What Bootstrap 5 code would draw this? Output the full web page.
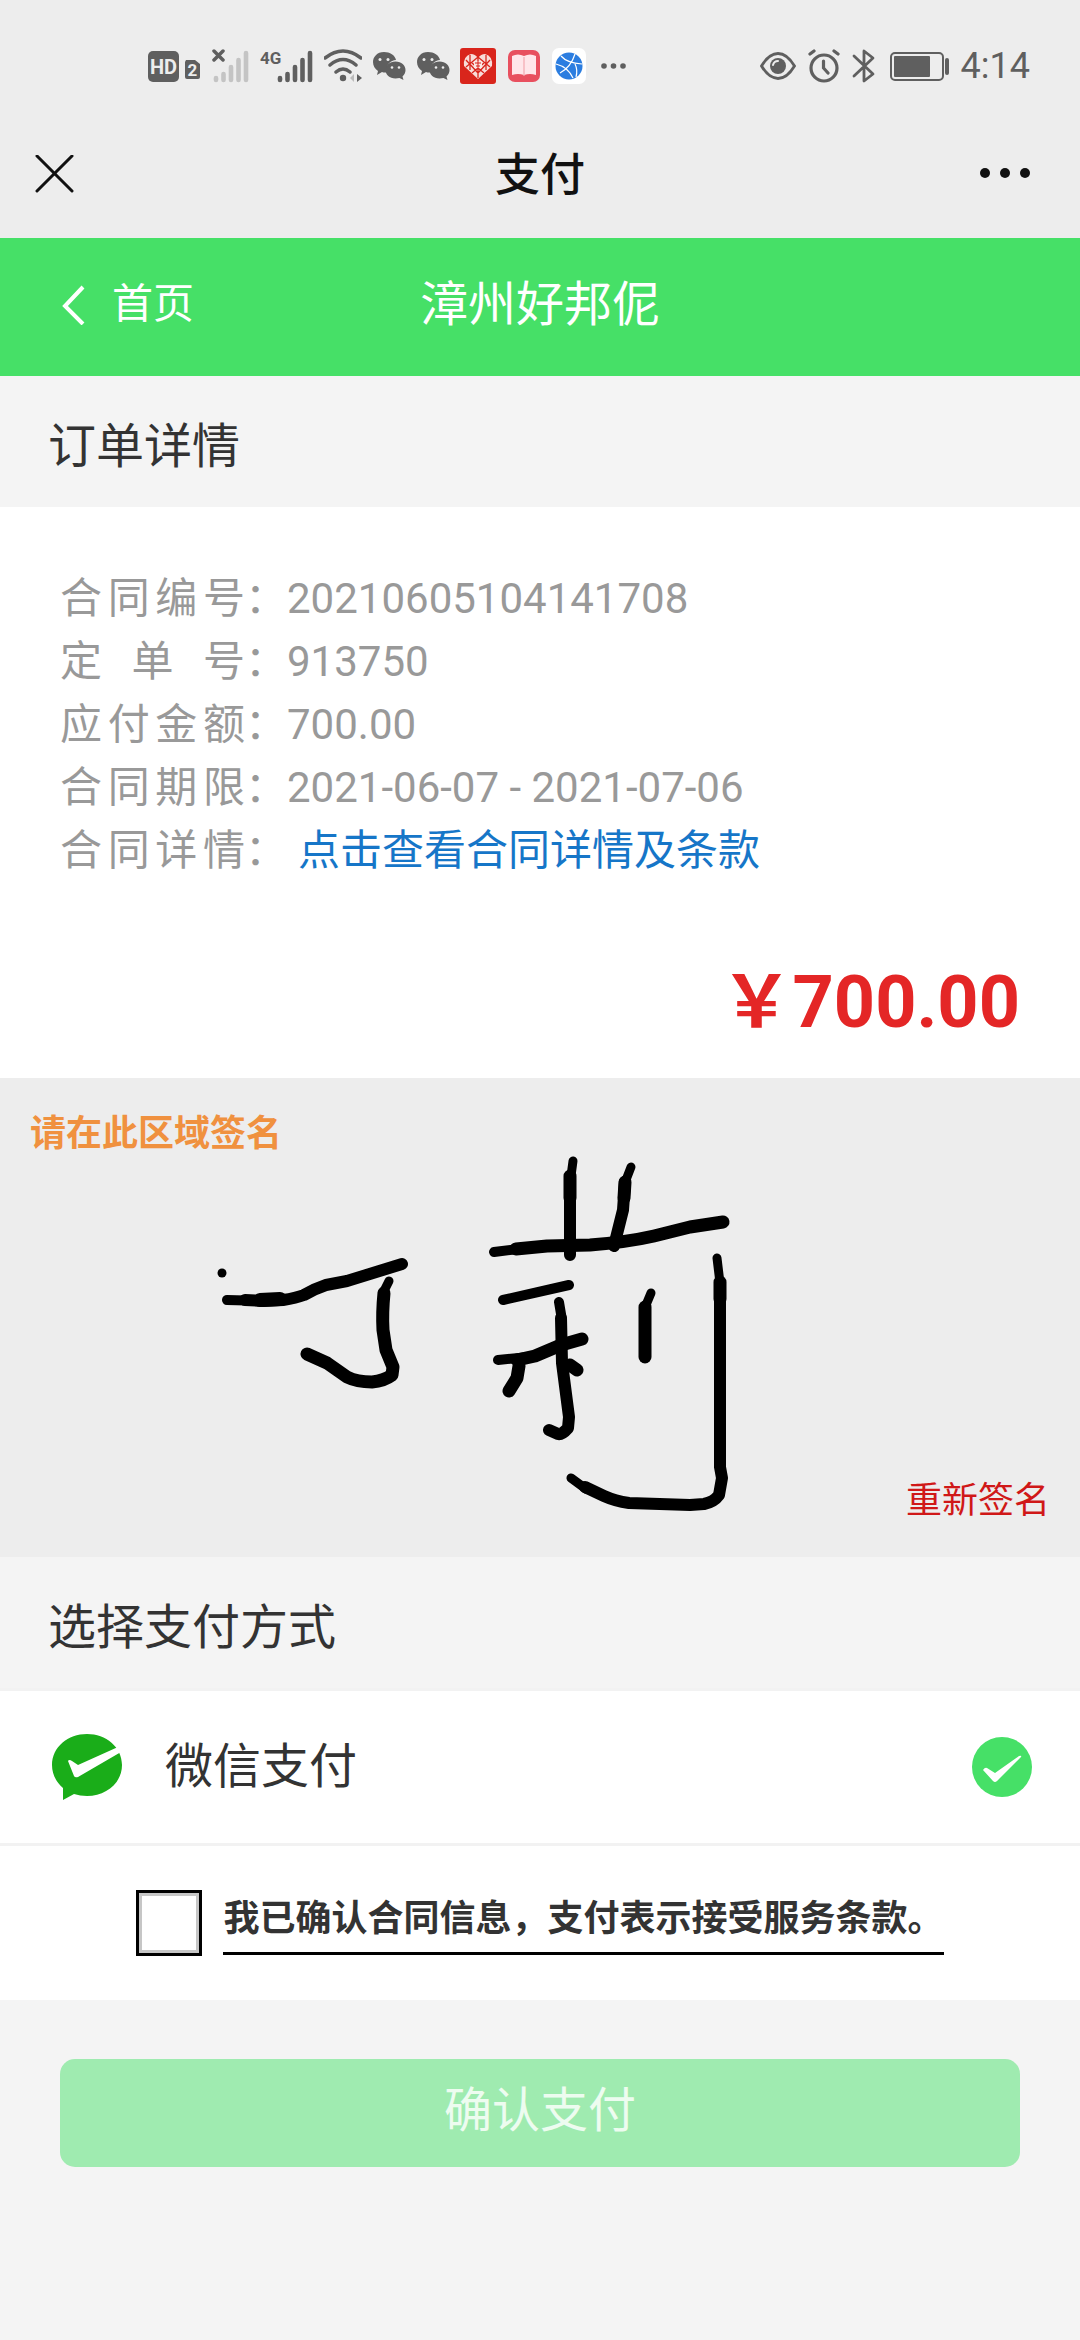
<!DOCTYPE html>
<html lang="zh-CN">
<head>
<meta charset="utf-8">
<meta name="viewport" content="width=device-width, initial-scale=1">
<title>支付</title>
<link rel="stylesheet" href="https://cdn.jsdelivr.net/npm/bootstrap@5.3.0/dist/css/bootstrap.min.css">
<style>
  :root { --pay-green: #46e067; --bar-grey: #ededed; --page-grey: #f4f4f4; --ink: #333; }
  body { font-family: Roboto, "Noto Sans CJK SC", sans-serif; background: var(--page-grey); color: var(--ink); font-size: 42px; line-height: 63px; }
  svg { display: block; flex: none; }
  a { text-decoration: none; }
  .top-area { background: var(--bar-grey); color: #111; padding-bottom: 20px; }
  .status-bar { height: 132px; padding: 0 50px 0 148px; color: #5f5f5f; }
  .status-left { gap: 10px; }
  .status-right { gap: 12px; }
  .status-time { font-size: 36px; line-height: 40px; }
  .title-bar { height: 86px; padding: 0 34px; }
  .title-bar h1 { font-size: 45px; line-height: 60px; font-weight: 500; margin: 0; padding-top: 2px; }
  .three-part { display: grid; grid-template-columns: 1fr auto 1fr; align-items: center; }
  .plain-btn { background: none; border: 0; padding: 0; color: inherit; }
  .shop-bar { background: var(--pay-green); height: 138px; padding: 0 60px 5px; }
  .shop-bar, .shop-bar a { color: #fff; }
  .shop-home { gap: 26px; font-size: 41px; }
  .shop-name { font-size: 48px; }
  .section-head { font-size: 48px; line-height: 63px; font-weight: 400; margin: 0; padding: 39px 48px 29px; }
  .order-box { padding: 60px 60px 0; color: #999; }
  .order-key { width: 185px; text-align-last: justify; font-weight: 400; }
  .order-link { color: #1676c8; margin-left: 11px; }
  .order-price { color: #e42626; font-size: 72px; line-height: 84px; font-weight: 700; padding: 79px 0 33px; text-align: right; }
  .sign-box { background: var(--bar-grey); height: 479px; font-size: 36px; line-height: 54px; padding: 29px 30px; }
  .sign-hint { color: #f0913f; font-weight: 700; }
  .sign-redo { color: #d01818; }
  .sign-ink { inset: 0; width: 100%; height: 100%; }
  .pay-row { padding: 43px 48px; border: solid #f2f2f2; border-width: 3px 0; font-size: 48px; line-height: 66px; }
  .pay-row label { gap: 37px; }
  .pay-radio.form-check-input { width: 60px; height: 60px; margin: 0; border: 0; }
  .pay-radio.form-check-input:checked { background-color: var(--pay-green); background-size: 60px 60px;
    background-image: url("data:image/svg+xml,%3Csvg xmlns='http://www.w3.org/2000/svg' viewBox='0 0 60 60'%3E%3Cpath d='M11 33q2-3 4-2l8 5 24-17q3-1 2 1L25 44q-2 2-4 0z' fill='%23fff'/%3E%3C/svg%3E"); }
  .agree-row { padding: 44px 48px; gap: 21px; font-size: 36px; line-height: 54px; font-weight: 700; }
  .agree-tick.form-check-input { width: 66px; height: 66px; margin: 0; border: 3px solid #000; border-radius: 0; box-shadow: inset 0 0 0 3px #c6c6c6; }
  .agree-text { border-bottom: 3px solid #000; padding-bottom: 6px; }
  .submit-area { padding: 59px 60px; }
  .submit-area .btn { --bs-btn-font-size: 48px; --bs-btn-line-height: 72px; --bs-btn-border-radius: 15px; --bs-btn-border-width: 0;
    --bs-btn-disabled-bg: #9febb0; --bs-btn-disabled-color: #edfcf0; --bs-btn-disabled-opacity: 1; padding: 16px 0 20px; }
</style>
<script src="https://cdn.jsdelivr.net/npm/bootstrap@5.3.0/dist/js/bootstrap.bundle.min.js"></script>
</head>
<body>
<svg width="0" height="0" class="position-absolute" aria-hidden="true">
  <symbol id="bars" viewBox="0 0 36 34">
    <path d="M3 29v2M10.500 25v6M18 18v13M25.500 11v20M33 4v27" fill="none" stroke="currentColor" stroke-width="4.600" stroke-linecap="round"/>
  </symbol>
  <symbol id="chat" viewBox="0 0 34 30">
    <path fill="currentColor" d="M12 1C5 1 1 6 1 11c0 4 2 7 5 9l-1 4 5-3q3 1 5 0c-2-7 4-12 9-12C23 4 18 1 12 1z"/>
    <path fill="currentColor" d="M23.500 10.500c-6 0-10 4-10 8.500s4 8.500 10 8.500l4-.5 4 2-1-3.500c2-2 3-4 3-6.500 0-4.500-4-8.500-10-8.500z"/>
    <g fill="#ededed"><circle cx="8" cy="8.500" r="1.500"/><circle cx="16" cy="8.500" r="1.500"/><circle cx="20" cy="16.500" r="1.300"/><circle cx="27" cy="16.500" r="1.300"/></g>
  </symbol>
</svg>

<header class="top-area">
  <div class="status-bar d-flex justify-content-between align-items-center">
    <div class="status-left d-flex align-items-center">
      <svg width="54" height="36" viewBox="0 0 54 36" font-family="Roboto" font-weight="700" fill="#ededed" text-anchor="middle">
        <rect x="0" y="3" width="31" height="31" rx="5" fill="#5f5f5f"/><text x="15.500" y="26" font-size="20">HD</text>
        <path d="M38 12h9l5 4v13q0 2-2 2H39q-2 0-2-2V14z" fill="#5f5f5f"/><text x="44.500" y="28" font-size="17">2</text>
      </svg>
      <svg width="38" height="36" viewBox="0 0 38 36"><use href="#bars" x="1" y="1" width="36" height="34" color="#c4c4c4"/><path d="M2 3l9 9M11 3l-9 9" stroke="#5f5f5f" stroke-width="3.500" stroke-linecap="round"/></svg>
      <svg width="54" height="36" viewBox="0 0 54 36"><text x="0" y="16" font-family="Roboto" font-weight="700" font-size="17" fill="#5f5f5f">4G</text><use href="#bars" x="17" y="1" width="36" height="34"/></svg>
      <svg width="38" height="36" viewBox="0 0 38 36" fill="none" stroke="#5f5f5f" stroke-width="3.500" stroke-linecap="round"><path d="M1 10q18-14 36 0M6 17q13-11 26 0M12 24q7-6 14 0"/><circle cx="19" cy="30" r="3.200" fill="#5f5f5f" stroke="none"/><path d="M30 26v8l-4-4z" fill="#bbb" stroke="none"/><path d="M33 26v8l5-4z" fill="#5f5f5f" stroke="none"/></svg>
      <svg width="34" height="30"><use href="#chat"/></svg>
      <svg width="34" height="30"><use href="#chat"/></svg>
      <svg width="36" height="36" viewBox="0 0 36 36"><rect width="36" height="36" rx="3" fill="#d9251c"/><path d="M18 31L4 18q-1-10 7-12 4 0 7 4 3-4 7-4 8 2 7 12z" fill="#f8dcd8"/><path d="M6 12l12 13 12-13M6 19l12-10 12 10M18 9v21M10 7v15M26 7v15M12 25l12-10M24 25L12 15" fill="none" stroke="#d9251c" stroke-width="1.300"/><rect x="14" y="13" width="8" height="7" fill="#fbe8e5"/><path d="M15 15h6M16 18h4M18 13v7" stroke="#d9251c"/></svg>
      <svg width="36" height="36" viewBox="0 0 36 36"><rect x="2" y="2" width="32" height="32" rx="7" fill="#e8505f"/><path d="M6 8q6-3 12 0 6-3 12 0v19q-6-2-12 0-6-2-12 0z" fill="#ffe6ea"/><path d="M18 9v19" stroke="#f4a8b0" stroke-width="1.200"/></svg>
      <svg width="34" height="36" viewBox="0 0 34 36"><rect width="34" height="36" rx="7" fill="#fff"/><circle cx="17" cy="18" r="13.500" fill="#2b7de0"/><path d="M4 16q12 3 17 14M9 8q6 7 21 8M8 25q11-6 15-19M24 29q2-7-1-13" stroke="#fff" stroke-width="1.200" fill="none"/></svg>
      <svg width="34" height="36" fill="#5f5f5f"><circle cx="8" cy="18" r="2.800"/><circle cx="17.500" cy="18" r="2.800"/><circle cx="27" cy="18" r="2.800"/></svg>
    </div>
    <div class="status-right d-flex align-items-center">
      <svg width="36" height="36" viewBox="0 0 36 36"><path d="M1.500 18Q9 5.500 18 5.500T34.500 18Q27 30.500 18 30.500T1.500 18z" fill="none" stroke="#5f5f5f" stroke-width="2.800"/><circle cx="18" cy="18" r="8" fill="#5f5f5f"/><path d="M13 17q1-4 5-4" stroke="#ededed" stroke-width="2" fill="none" stroke-linecap="round"/></svg>
      <svg width="32" height="36" viewBox="0 0 32 36" fill="none" stroke="#5f5f5f" stroke-width="3.200" stroke-linecap="round"><circle cx="16" cy="20" r="13"/><path d="M15.500 13v7l4.500 5M2 6l4-3M30 6l-4-3"/></svg>
      <svg width="24" height="36" viewBox="0 0 24 36" fill="none" stroke="#5f5f5f" stroke-width="2.800" stroke-linejoin="round" stroke-linecap="round"><path d="M2 8l19 18-9 7V3l9 7L2 28"/></svg>
      <svg width="61" height="36" viewBox="0 0 61 36"><rect x="3" y="5" width="52" height="27" rx="4" fill="none" stroke="#5f5f5f" stroke-width="2"/><rect x="6" y="8" width="36" height="21" rx="1" fill="#5f5f5f"/><rect x="57" y="10" width="4" height="17" rx="2" fill="#5f5f5f"/></svg>
      <time class="status-time">4:14</time>
    </div>
  </div>
  <div class="title-bar three-part">
    <button type="button" class="plain-btn me-auto" aria-label="关闭"><svg width="40" height="40" viewBox="0 0 40 40" stroke="#111" stroke-width="3" stroke-linecap="round"><path d="M3 1l35 35M38 1L3 36"/></svg></button>
    <h1>支付</h1>
    <button type="button" class="plain-btn ms-auto" aria-label="更多"><svg width="66" height="40" viewBox="0 0 66 40" fill="#111"><circle cx="5" cy="18" r="5"/><circle cx="25" cy="18" r="5"/><circle cx="45" cy="18" r="5"/></svg></button>
  </div>
</header>

<nav class="shop-bar three-part">
  <a href="#" class="shop-home d-flex align-items-center"><svg width="26" height="40" viewBox="0 0 26 40" fill="none" stroke="#fff" stroke-width="4"><path d="M23 2L5 21l18 18"/></svg>首页</a>
  <span class="shop-name">漳州好邦伲</span>
</nav>

<main>
  <h2 class="section-head">订单详情</h2>
  <section class="bg-white order-box">
    <dl class="m-0">
      <div class="d-flex"><dt class="order-key">合同编号</dt><span>：</span><dd class="m-0">20210605104141708</dd></div>
      <div class="d-flex"><dt class="order-key">定 单 号</dt><span>：</span><dd class="m-0">913750</dd></div>
      <div class="d-flex"><dt class="order-key">应付金额</dt><span>：</span><dd class="m-0">700.00</dd></div>
      <div class="d-flex"><dt class="order-key">合同期限</dt><span>：</span><dd class="m-0">2021-06-07 - 2021-07-06</dd></div>
      <div class="d-flex"><dt class="order-key">合同详情</dt><span>：</span><dd class="m-0"><a href="#" class="order-link">点击查看合同详情及条款</a></dd></div>
    </dl>
    <div class="order-price">￥700.00</div>
  </section>

  <section class="sign-box position-relative d-flex flex-column justify-content-between">
    <span class="sign-hint">请在此区域签名</span>
    <svg class="sign-ink position-absolute" viewBox="0 0 1080 479" role="img" aria-label="签名" fill="none" stroke="#000" stroke-width="12" stroke-linecap="round" stroke-linejoin="round">
      <circle cx="222" cy="195" r="4.500" fill="#000" stroke="none"/>
      <path stroke-width="10" d="M227 222L263 223"/>
      <path d="M245 222L263 223 283 222Q296 220 304 217 314 211 326 207L347 203 402 186"/>
      <path stroke-width="14" d="M260 222L280 221"/>
      <path stroke-width="9" d="M389 203L384 213"/>
      <path stroke-width="13" d="M384 215Q382 235 383 252L386 272 393 289 392 297Q384 303 372 304 357 304 347 299L327 285 307 276"/>
      <path stroke-width="9" d="M573 83L571 98M631 89L626 102"/>
      <path stroke-width="13" d="M570 98V120M625 104L624 120"/>
      <path d="M570 100V177M625 104L623 132 614 168"/>
      <path stroke-width="10" d="M494 174L519 171"/>
      <path stroke-width="13" d="M516 171L547 168 590 167Q628 164 654 158L690 149 723 144"/>
      <path stroke-width="10" d="M503 222L569 207M559 224L562 242"/>
      <path stroke-width="12" d="M561 240L562 285 569 339 568 350Q562 357 558 356L549 352"/>
      <path stroke-width="10" d="M498 282L529 279"/>
      <path stroke-width="13" d="M517 282L535 278 561 267 582 261M519 288L517 300 509 313M570 287L577 292"/>
      <path stroke-width="9" d="M651 215L646 227"/>
      <path stroke-width="13" d="M645 229V279"/>
      <path stroke-width="9" d="M717 180L720 205M571 400L586 411"/>
      <path stroke-width="13" d="M720 204V221"/>
      <path d="M720 205V389L722 400 719 417Q714 424 704 426L690 427Q660 426 629 425 615 423 604 418L585 409"/>
    </svg>
    <button type="button" class="plain-btn sign-redo align-self-end position-relative">重新签名</button>
  </section>

  <h2 class="section-head">选择支付方式</h2>
  <form class="bg-white">
    <div class="pay-row d-flex align-items-center">
      <label for="wxpay" class="d-flex align-items-center flex-grow-1">
        <svg width="80" height="66" viewBox="0 0 80 66"><path d="M39 0C58 0 74 13 74 31S58 62 39 62q-7 0-13-2L15 66V54C8 48 4 40 4 31 4 13 20 0 39 0z" fill="#1aad19"/><path d="M20 27q1-2 4 0l6 4 40-18 3 5L30 43q-3 1-4-1z" fill="#fff"/></svg>
        微信支付
      </label>
      <input type="radio" class="form-check-input pay-radio" id="wxpay" name="method" checked>
    </div>
    <div class="agree-row d-flex justify-content-center align-items-center">
      <input type="checkbox" class="form-check-input agree-tick" id="agree">
      <label for="agree" class="agree-text">我已确认合同信息，支付表示接受服务条款。</label>
    </div>
  </form>
  <div class="submit-area d-grid">
    <button type="submit" class="btn btn-success" disabled>确认支付</button>
  </div>
</main>
</body>
</html>
